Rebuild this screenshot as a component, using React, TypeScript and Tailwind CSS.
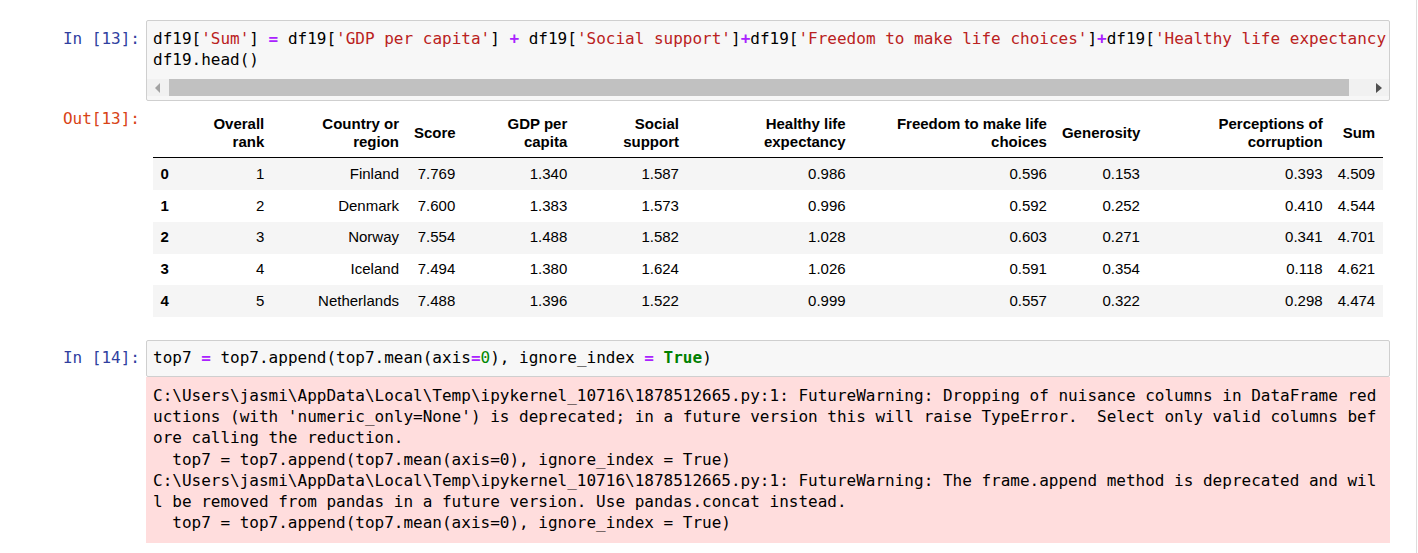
import React from "react";

const mono = "[font-family:'DejaVu_Sans_Mono',monospace]";

const Op = ({ c }: { c: string }) => <span className="text-[#AA22FF] font-bold">{c}</span>;
const Str = ({ c }: { c: string }) => <span className="text-[#BA2121]">{c}</span>;
const Kw = ({ c }: { c: string }) => <span className="text-[#008000] font-bold">{c}</span>;
const Num = ({ c }: { c: string }) => <span className="text-[#008800]">{c}</span>;

const headers: { l1: string; l2?: string }[] = [
  { l1: "" },
  { l1: "Overall", l2: "rank" },
  { l1: "Country or", l2: "region" },
  { l1: "Score" },
  { l1: "GDP per", l2: "capita" },
  { l1: "Social", l2: "support" },
  { l1: "Healthy life", l2: "expectancy" },
  { l1: "Freedom to make life", l2: "choices" },
  { l1: "Generosity" },
  { l1: "Perceptions of", l2: "corruption" },
  { l1: "Sum" },
];

const rows: string[][] = [
  ["0", "1", "Finland", "7.769", "1.340", "1.587", "0.986", "0.596", "0.153", "0.393", "4.509"],
  ["1", "2", "Denmark", "7.600", "1.383", "1.573", "0.996", "0.592", "0.252", "0.410", "4.544"],
  ["2", "3", "Norway", "7.554", "1.488", "1.582", "1.028", "0.603", "0.271", "0.341", "4.701"],
  ["3", "4", "Iceland", "7.494", "1.380", "1.624", "1.026", "0.591", "0.354", "0.118", "4.621"],
  ["4", "5", "Netherlands", "7.488", "1.396", "1.522", "0.999", "0.557", "0.322", "0.298", "4.474"],
];

const errLines = [
  "C:\\Users\\jasmi\\AppData\\Local\\Temp\\ipykernel_10716\\1878512665.py:1: FutureWarning: Dropping of nuisance columns in DataFrame red",
  "uctions (with 'numeric_only=None') is deprecated; in a future version this will raise TypeError.  Select only valid columns bef",
  "ore calling the reduction.",
  "  top7 = top7.append(top7.mean(axis=0), ignore_index = True)",
  "C:\\Users\\jasmi\\AppData\\Local\\Temp\\ipykernel_10716\\1878512665.py:1: FutureWarning: The frame.append method is deprecated and wil",
  "l be removed from pandas in a future version. Use pandas.concat instead.",
  "  top7 = top7.append(top7.mean(axis=0), ignore_index = True)",
];

export default function App() {
  return (
    <div className="w-[1418px] h-[553px] bg-white overflow-hidden">
      <div className="w-[1417px] h-[553px] border-r border-[#dddddd] pt-[20px]">
        {/* Cell 13 input */}
        <div className="flex">
          <div className={`w-[146px] pr-[6px] text-right pt-[7.5px] text-[16px] leading-[21.25px] text-[#303F9F] ${mono} whitespace-pre`}>
            In [13]:
          </div>
          <div className="w-[1244px] h-[81px] border border-[#cfcfcf] rounded-[2px] bg-[#f7f7f7] overflow-hidden flex flex-col">
            <div className={`pt-[6.5px] px-[6px] text-[16px] leading-[21.25px] text-black ${mono} whitespace-pre`}>
              <div>
                df19[<Str c="'Sum'" />] <Op c="=" /> df19[<Str c="'GDP per capita'" />] <Op c="+" /> df19[<Str c="'Social support'" />]<Op c="+" />df19[<Str c="'Freedom to make life choices'" />]<Op c="+" />df19[<Str c="'Healthy life expectancy'" />]
              </div>
              <div>df19.head()</div>
            </div>
            <div className="mt-[9px] h-[17px] bg-[#f1f1f1] flex items-center">
              <div className="w-[22px] h-[17px] flex items-center justify-center">
                <svg width="6" height="10" viewBox="0 0 6 10">
                  <polygon points="5,0 5,10 0,5" fill="#a3a3a3" />
                </svg>
              </div>
              <div className="w-[1180px] h-[17px] bg-[#c1c1c1]" />
              <div className="flex-1" />
              <div className="w-[21px] h-[17px] flex items-center justify-center">
                <svg width="6" height="10" viewBox="0 0 6 10">
                  <polygon points="0,0 6,5 0,10" fill="#505050" />
                </svg>
              </div>
            </div>
          </div>
        </div>

        {/* Cell 13 output */}
        <div className="flex pt-[6.8px] pb-[22.7px]">
          <div className={`w-[146px] pr-[6px] text-right pt-[0.6px] text-[16px] leading-[21.25px] text-[#D84315] ${mono} whitespace-pre`}>
            Out[13]:
          </div>
          <div className="pl-[7px]">
            <table className="table-fixed border-collapse w-[1229.7px] text-[15px] text-black [font-family:'Liberation_Sans',Arial,sans-serif]">
              <colgroup>
                <col className="w-[47px]" />
                <col className="w-[71.8px]" />
                <col className="w-[134.7px]" />
                <col className="w-[56.3px]" />
                <col className="w-[112px]" />
                <col className="w-[111.7px]" />
                <col className="w-[166.7px]" />
                <col className="w-[201.3px]" />
                <col className="w-[93px]" />
                <col className="w-[182.7px]" />
                <col className="w-[52.5px]" />
              </colgroup>
              <thead>
                <tr className="border-b border-black">
                  {headers.map((h, i) => (
                    <th key={i} className="px-[7.5px] py-[7.5px] text-right align-middle font-bold leading-[17.25px] whitespace-nowrap">
                      {h.l1}
                      {h.l2 ? (
                        <>
                          <br />
                          {h.l2}
                        </>
                      ) : null}
                    </th>
                  ))}
                </tr>
              </thead>
              <tbody>
                {rows.map((r, ri) => (
                  <tr key={ri} className={ri % 2 === 0 ? "bg-[#f5f5f5]" : "bg-white"}>
                    {r.map((c, ci) =>
                      ci === 0 ? (
                        <th key={ci} className="px-[7.5px] py-[7.5px] text-left align-middle font-bold leading-[16.8px]">
                          {c}
                        </th>
                      ) : (
                        <td key={ci} className="px-[7.5px] py-[7.5px] text-right align-middle leading-[16.8px] whitespace-nowrap">
                          {c}
                        </td>
                      )
                    )}
                  </tr>
                ))}
              </tbody>
            </table>
          </div>
        </div>

        {/* Cell 14 input */}
        <div className="flex">
          <div className={`w-[146px] pr-[6px] text-right pt-[7.5px] text-[16px] leading-[21.25px] text-[#303F9F] ${mono} whitespace-pre`}>
            In [14]:
          </div>
          <div className="w-[1244px] h-[37px] border border-[#cfcfcf] rounded-[2px] bg-[#f7f7f7] overflow-hidden">
            <div className={`pt-[6.5px] px-[6px] text-[16px] leading-[21.25px] text-black ${mono} whitespace-pre`}>
              top7 <Op c="=" /> top7.append(top7.mean(axis<Op c="=" /><Num c="0" />), ignore_index <Op c="=" /> <Kw c="True" />)
            </div>
          </div>
        </div>

        {/* Cell 14 output (stderr) */}
        <div className="flex">
          <div className="w-[146px]" />
          <div className={`w-[1244px] bg-[#ffdddd] pt-[8px] pb-[9px] pl-[7px] text-[16px] leading-[21.25px] text-black ${mono} whitespace-pre overflow-hidden`}>
            {errLines.map((l, i) => (
              <div key={i}>{l}</div>
            ))}
          </div>
        </div>
      </div>
    </div>
  );
}
